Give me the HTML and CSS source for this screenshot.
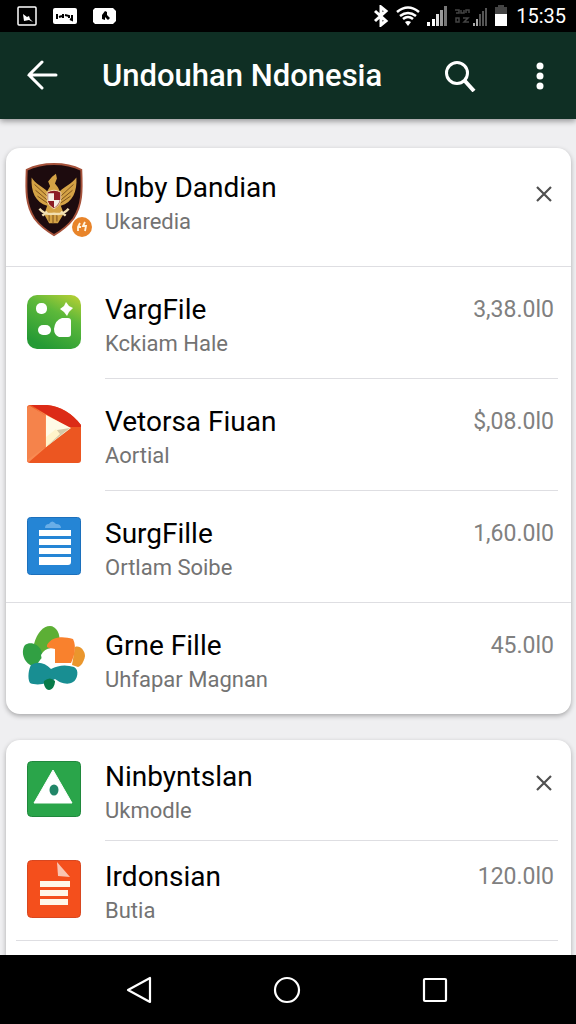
FILE: index.html
```html
<!DOCTYPE html>
<html lang="id">
<head>
<meta charset="utf-8">
<meta name="viewport" content="width=device-width, initial-scale=1">
<title>Undouhan Ndonesia</title>
<link rel="stylesheet" href="styles.css">
</head>
<body>
<div class="status">
  <div class="status-left">
    <svg width="20" height="20" viewBox="0 0 20 20"><rect x="1" y="1" width="18" height="18" rx="1" fill="none" stroke="#fff" stroke-width="1.5"/><path d="M6 8l4 3 2-1 1 3 3 3-4-2-5 1z" fill="#fff"/></svg>
    <svg width="24" height="20" viewBox="0 0 24 20"><rect y="2" width="24" height="16" rx="2" fill="#fff"/><path d="M4 8v5M6 11l3-1M10 8v4M12 9l4 1v2M19 9v5l-2-1" fill="none" stroke="#000" stroke-width="2"/></svg>
    <svg width="24" height="20" viewBox="0 0 24 20"><path d="M2 2h18l3 3v10l-3 3H2l-2-2V4z" fill="#fff"/><path d="M9 9l3-4 2 1v3l3 3-2 2-3-3v3l-3-1z" fill="#000"/></svg>
  </div>
  <div class="status-right">
    <svg width="18" height="22" viewBox="0 0 18 22"><path d="M3 6l11 10-5 4V2l5 4L3 16" fill="none" stroke="#fff" stroke-width="3"/></svg>
    <svg width="24" height="22" viewBox="0 0 24 22"><path d="M1 7q11-9 22 0M4 11q8-6 16 0M7 14q5-4 10 0" fill="none" stroke="#fff" stroke-width="2.6"/><path d="M9 17q3-2 6 0l-3 4z" fill="#fff"/></svg>
    <svg width="22" height="22" viewBox="0 0 22 22"><path d="M1 17h3v4H1zM6 14h3v7H6z" fill="#fff"/><path d="M10 9h3v12h-3z" fill="#ddd"/><path d="M14 5h3v16h-3z" fill="#999"/><path d="M18 1h3v20h-3z" fill="#777"/></svg>
    <svg width="34" height="22" viewBox="0 0 34 22"><path d="M1 5h4v3H2M7 5v3h3V5M12 8V5h3v3M2 13h3v4H2zM9 13h5l-4 4h5" fill="none" stroke="#444" stroke-width="1.5"/><path d="M19 18h2v3h-2zM22 14h2v7h-2z" fill="#aaa"/><path d="M25 9h2v12h-2zM28 6h2v15h-2zM31 3h2v18h-2z" fill="#555"/></svg>
    <svg width="14" height="22" viewBox="0 0 14 22"><path d="M4 0h6v2h3v7H1V2h3z" fill="#444"/><path d="M1 9h12v12H1z" fill="#fff"/></svg>
    <time class="clock">15:35</time>
  </div>
</div>

<header class="appbar">
  <button class="icon-btn" aria-label="Kembali"><svg width="32" height="32" viewBox="0 0 32 32"><path d="M30 15H3M16 2L3 15l13 13" fill="none" stroke="#fff" stroke-width="3" stroke-linecap="round"/></svg></button>
  <h1 class="appbar-title">Undouhan Ndonesia</h1>
  <button class="icon-btn" aria-label="Cari"><svg width="32" height="32" viewBox="0 0 32 32"><circle cx="13" cy="13" r="10.5" fill="none" stroke="#fff" stroke-width="3"/><path d="M20.500 20.500L30 31" stroke="#fff" stroke-width="4"/></svg></button>
  <button class="icon-btn" aria-label="Menu"><svg width="32" height="32" viewBox="0 0 32 32" fill="#fff"><circle cx="16" cy="6" r="3.500"/><circle cx="16" cy="16" r="3.500"/><circle cx="16" cy="26" r="3.500"/></svg></button>
</header>

<main class="content">
  <section class="card">
    <div class="row row-head">
      <div class="thumb">
        <svg width="60" height="74" viewBox="0 0 60 76">
          <path d="M30 1C20 1 10 3 2 7c-1 22-1 36 8 50 6 8 13 13 20 17 7-4 14-9 20-17 9-14 9-28 8-50C50 3 40 1 30 1z" fill="#1d0b0e" stroke="#a5523b" stroke-width="2"/>
          <path d="M7 15c4 7 11 9 16 14l3-5-2-5 4-5 4-3 1 5-2 5 3 4 2 4c5-5 12-7 17-14 1 14-4 26-16 29l3 8-6 10h-9l-5-9 3-9C11 41 6 29 7 15z" fill="#d4a245"/>
          <path d="M10 22l14 13M11 28l12 10M13 34l10 7M50 22L36 35M49 28L37 38M47 34l-10 7M25 52v8M29 52v10M33 52v8" stroke="#7b501c" stroke-width="1"/>
          <path d="M23 30q7-4 14 0v7q-1 7-7 10-7-4-7-10z" fill="#8b1c25" stroke="#f0dfb0"/>
          <path d="M24 31h6v8h-6zM30 38h6q-1 5-6 8z" fill="#f4eee5"/>
          <path d="M15 47q6 7 15 5 9 2 15-5M18 54l5-4M42 54l-5-4" fill="none" stroke="#f2dfb1" stroke-width="2.500"/>
        </svg>
        <span class="badge"><svg width="20" height="20" viewBox="0 0 20 20"><circle cx="10" cy="10" r="10" fill="#e8842a"/><path d="M8 6l-2 4v4M6 10h3M13 5l-2 4h3l-1 5" fill="none" stroke="#fff3df" stroke-width="1.800"/></svg></span>
      </div>
      <div class="text"><h2 class="name">Unby Dandian</h2><p class="sub">Ukaredia</p></div>
      <button class="close" aria-label="Tutup"><svg width="16" height="16" viewBox="0 0 16 16"><path d="M1 1l14 14M15 1L1 15" stroke="#505050" stroke-width="2.200"/></svg></button>
    </div>
    <div class="row line-full">
      <div class="thumb"><svg width="54" height="54" viewBox="0 0 54 54">
        <defs><linearGradient id="leaf" x1="0.900" y1="0" x2="0.400" y2="1"><stop offset="0" stop-color="#b5cf35"/><stop offset="0.400" stop-color="#5cb83a"/><stop offset="1" stop-color="#259a35"/></linearGradient></defs>
        <rect width="54" height="54" rx="10" fill="url(#leaf)"/><rect x="9" y="8" width="11" height="11" rx="5" fill="#fff"/><path d="M39 7l3 4 4 2-4 4-2 4-3-4-4-3 4-3z" fill="#fff"/><rect x="11" y="30" width="13" height="10" rx="5" fill="#fff"/><path d="M35 23h6q3 0 3 3v13q0 3-3 3h-9q-5-2-5-8 1-9 8-11z" fill="#fff"/></svg></div>
      <div class="text"><h2 class="name">VargFile</h2><p class="sub">Kckiam Hale</p></div>
      <span class="price">3,38.0l0</span>
    </div>
    <div class="row line-inset">
      <div class="thumb"><svg width="54" height="58" viewBox="0 0 54 58">
        <path d="M3 0h17q20 2 34 20v35q0 3-3 3H3q-3 0-3-3V3q0-3 3-3z" fill="#ec5621"/><path d="M4 0h16q20 2 34 20v2L40 22z" fill="#dc2b17"/><path d="M0 3q0-2 3-2l15 9v32L1 57l-1-2z" fill="#f5834b"/><path d="M4 1l37 21-2 3L2 57l-2-2 18-13V10z" fill="#f98a52"/><path d="M19 10l25 13-25 19z" fill="#fffbe6"/><path d="M19 42l11-17 13-2z" fill="#d5c9a7"/><path d="M19 32l10-8 4 5-14 13z" fill="#fff4cb"/></svg></div>
      <div class="text"><h2 class="name">Vetorsa Fiuan</h2><p class="sub">Aortial</p></div>
      <span class="price">$,08.0l0</span>
    </div>
    <div class="row line-inset">
      <div class="thumb"><svg width="54" height="58" viewBox="0 0 54 58">
        <rect x="0.500" y="0.500" width="53" height="57" rx="3" fill="#2585d5" stroke="#1c70bc"/><path d="M18 11q0-4 4-4 3-5 7 0 5 0 5 4z" fill="#69aee7"/><path d="M12 13h32v6H12zM12 22h32v6H12zM12 31h32v6H12zM12 40h32v5q0 3-3 3H12z" fill="#fff"/></svg></div>
      <div class="text"><h2 class="name">SurgFille</h2><p class="sub">Ortlam Soibe</p></div>
      <span class="price">1,60.0l0</span>
    </div>
    <div class="row line-full">
      <div class="thumb"><svg width="64" height="66" viewBox="0 0 64 66">
        <path d="M12 19C15 8 21 1 28 1c6 0 11 8 9 16L20 34z" fill="#5caf35"/><path d="M3 20c5-4 13-1 16 5l2 6-8 11C2 40-2 27 3 20z" fill="#31a043"/><path d="M53 22c5-2 10 4 10 9-1 6-4 10-7 11l-6-2z" fill="#ea962d"/><path d="M25 20c5-9 16-9 26-6 4 8 1 18-2 24H33V26l-8-4z" fill="#f9812d"/><path d="M19 30q5-9 14-6v14l6 2-10 4-8-3z" fill="#fff"/><path d="M9 40q10-6 20 4 11-6 23-2c6 3 3 13-1 15-6 4-14 0-18-3-7 5-18 7-25 4-3-5-1-15 1-18z" fill="#188e92"/><path d="M22 56q6-5 11 0c0 5-3 9-6 9s-6-5-5-9z" fill="#087b49"/></svg></div>
      <div class="text"><h2 class="name">Grne Fille</h2><p class="sub">Uhfapar Magnan</p></div>
      <span class="price">45.0l0</span>
    </div>
  </section>

  <section class="card">
    <div class="row row-compact">
      <div class="thumb"><svg width="54" height="56" viewBox="0 0 54 56"><rect x="0.500" y="0.500" width="53" height="55" rx="4" fill="#2aa54a" stroke="#20883d"/><path d="M26 9L45 42H7z" fill="#fff" stroke="#fff" stroke-linejoin="round"/><ellipse cx="27" cy="29" rx="4.500" ry="5.500" fill="#218668"/></svg></div>
      <div class="text"><h2 class="name">Ninbyntslan</h2><p class="sub">Ukmodle</p></div>
      <button class="close" aria-label="Tutup"><svg width="16" height="16" viewBox="0 0 16 16"><path d="M1 1l14 14M15 1L1 15" stroke="#505050" stroke-width="2.200"/></svg></button>
    </div>
    <div class="row row-compact line-inset">
      <div class="thumb"><svg width="54" height="58" viewBox="0 0 54 58"><rect x="0.500" y="0.500" width="53" height="57" rx="4" fill="#f44f1c" stroke="#d84720"/><path d="M30 2l13 15-12-1z" fill="#f9c5b2"/><path d="M13 21h30v6H13zM13 30h28v6H13zM13 39h28v6H13z" fill="#fff6e8"/></svg></div>
      <div class="text"><h2 class="name">Irdonsian</h2><p class="sub">Butia</p></div>
      <span class="price">120.0l0</span>
    </div>
    <div class="row row-next"></div>
  </section>
</main>

<nav class="navbar">
  <button class="icon-btn" aria-label="Kembali"><svg width="28" height="28" viewBox="0 0 28 28"><path d="M25 2v24L3 14z" fill="none" stroke="#fff" stroke-width="2.200" stroke-linejoin="round"/></svg></button>
  <button class="icon-btn" aria-label="Beranda"><svg width="28" height="28" viewBox="0 0 28 28"><circle cx="14" cy="14" r="12" fill="none" stroke="#fff" stroke-width="2.200"/></svg></button>
  <button class="icon-btn" aria-label="Terbaru"><svg width="28" height="28" viewBox="0 0 28 28"><rect x="3" y="3" width="22" height="22" rx="1" fill="none" stroke="#fff" stroke-width="2.200"/></svg></button>
</nav>
</body>
</html>
```
FILE: styles.css
```css
* { box-sizing: border-box; }

body {
  margin: 0;
  height: 100vh;
  display: flex;
  flex-direction: column;
  background: #efeff1;
  color: #000;
  font-family: Roboto, "Liberation Sans", sans-serif;
}

h1, h2, p { margin: 0; font-weight: 400; }
svg { display: block; }
button { border: 0; padding: 0; background: none; cursor: pointer; }

.status {
  flex: none;
  display: flex;
  justify-content: space-between;
  align-items: center;
  padding: 0 10px 0 17px;
  height: 32px;
  background: #000;
  color: #fff;
}
.status-left { display: flex; gap: 16px; }
.status-right { display: flex; align-items: center; gap: 6px; }
.clock { margin-left: 2px; font-size: 20px; line-height: 32px; }

.appbar {
  flex: none;
  display: flex;
  align-items: center;
  padding: 0 20px 0 26px;
  height: 87px;
  background: #0f2f24;
  color: #fff;
  box-shadow: 0 2px 6px rgba(0, 0, 0, 0.4);
  z-index: 1;
}
.icon-btn { flex: none; display: grid; place-items: center; }
.appbar-title {
  flex: 1;
  margin-left: 44px;
  font-size: 31px;
  line-height: 40px;
  font-weight: 500;
  white-space: nowrap;
}
.appbar .icon-btn + .icon-btn { margin-left: 48px; }

.content {
  flex: 1;
  min-height: 0;
  display: flex;
  flex-direction: column;
  gap: 26px;
  padding: 29px 5px 0 6px;
  overflow-y: auto;
  scrollbar-width: none;
}

.card {
  flex: none;
  background: #fff;
  border-radius: 14px;
  box-shadow: 0 2px 5px rgba(0, 0, 0, 0.3);
}

.row {
  position: relative;
  display: grid;
  grid-template-columns: 64px 1fr auto;
  column-gap: 19px;
  padding: 26px 17px 18px 16px;
}
.row-head { padding: 22px 17px 28px 16px; }
.row-compact { padding: 19px 17px 13px 16px; }
.row-next { padding: 20px 0; }

.line-full::before,
.line-inset::before,
.row-next::before {
  content: "";
  position: absolute;
  top: 0;
  left: 0;
  right: 0;
  border-top: 1px solid #dedee2;
}
.line-inset::before { left: 99px; right: 13px; }
.row-next::before { left: 10px; right: 13px; }

.thumb {
  position: relative;
  display: grid;
  place-content: center;
  height: 60px;
}
.badge { position: absolute; right: -6px; bottom: -7px; }

.name { font-size: 28px; line-height: 36px; }
.sub { font-size: 22px; line-height: 32px; color: #737373; }
.price { font-size: 23px; line-height: 36px; color: #808080; }
.close {
  display: grid;
  place-items: center;
  margin: 12px 2px 0 0;
  height: 24px;
}

.navbar {
  flex: none;
  display: flex;
  justify-content: center;
  gap: 120px;
  height: 69px;
  padding-right: 2px;
  background: #000;
}
```
